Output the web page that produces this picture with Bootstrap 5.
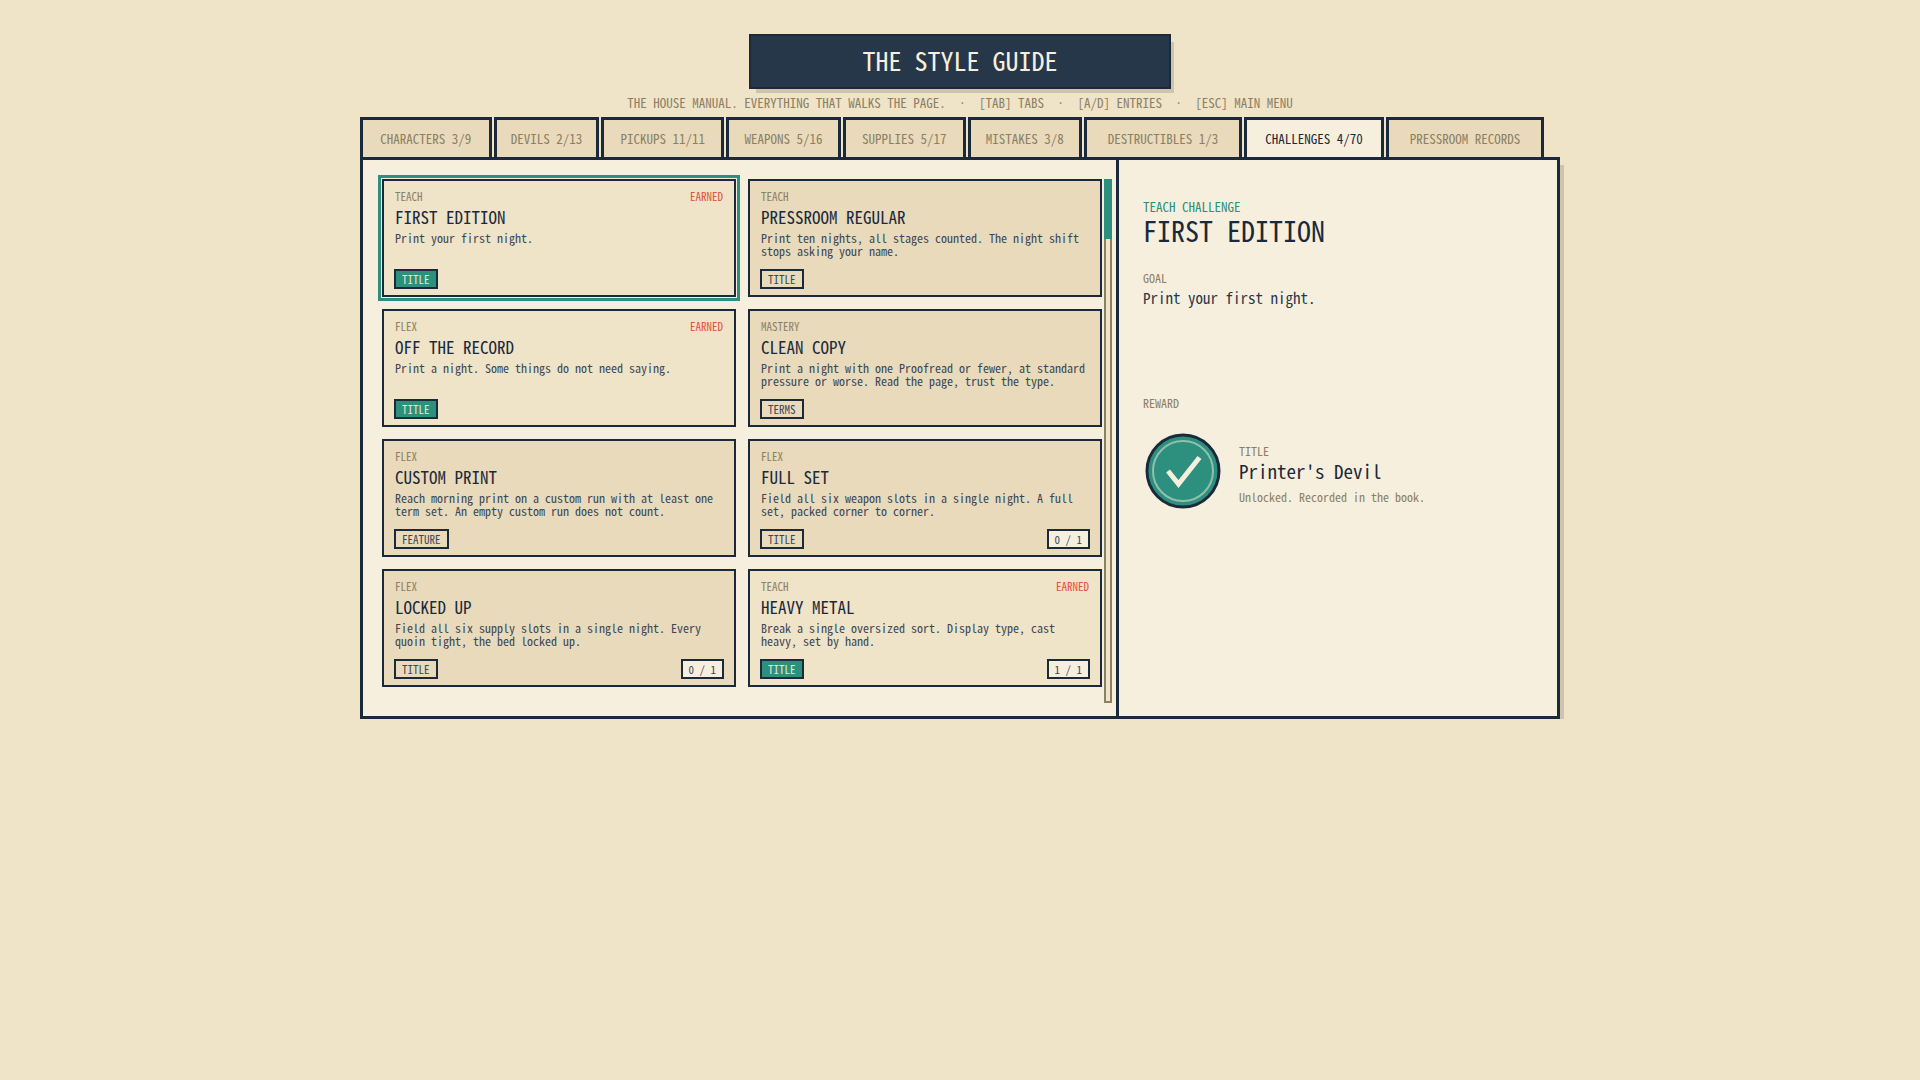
<!DOCTYPE html>
<html lang="en">
<head>
<meta charset="utf-8">
<meta name="viewport" content="width=device-width, initial-scale=1">
<title>The Style Guide</title>
<link href="https://cdn.jsdelivr.net/npm/bootstrap@5.3.0/dist/css/bootstrap.min.css" rel="stylesheet">
<style>
  :root {
    --ink: #1b2a3b; --slate: #27374a; --paper: #f7efdd; --sand: #efe3c8;
    --tan: #e8dabb; --mute: #8c8063; --green: #2d8f7d; --red: #e0523f; --shade: #cdc3ae;
  }
  body {
    background: var(--sand); color: var(--ink);
    font-family: "Noto Sans Mono CJK JP", "Noto Sans Mono CJK SC", "Liberation Mono", monospace;
    font-size: 12px; line-height: 16px;
  }
  button { font: inherit; color: inherit; }
  .guide { max-width: 1200px; }
  .masthead {
    width: 422px; max-width: 100%; height: 55px; margin-top: 34px;
    background: var(--slate); border: 2px solid var(--ink); color: var(--paper);
    box-shadow: 5px 6px 0 -2px var(--shade); font-size: 26px; line-height: 32px;
  }
  .hints { font-size: 13px; line-height: 16px; color: var(--mute); white-space: pre-wrap; padding: 6px 0; }
  .tabstrip { gap: 2px; }
  .tabstrip button {
    flex: 1 1 0; height: 40px; padding: 1px 2px 0; white-space: nowrap; font-size: 13px;
    background: var(--tan); color: var(--mute); border: 3px solid var(--ink); border-bottom: 0;
  }
  .tabstrip button.active { background: var(--paper); color: var(--ink); }
  .ledger { background: var(--paper); border: 3px solid var(--ink); box-shadow: 6px 6px 0 -2px var(--shade); }
  .entries { flex: 1 1 0; padding: 19px 4px 13px 19px; gap: 2px; }
  .entry-grid { display: grid; grid-template-columns: 1fr 1fr; gap: 12px; margin-bottom: 16px; }
  .entry { height: 118px; padding: 7px 10px 6px; background: var(--tan); border: 2px solid var(--ink); }
  .entry.earned { background: var(--sand); }
  .entry.picked { outline: 3px solid var(--green); outline-offset: 1px; }
  .kicker { font-size: 11px; line-height: 16px; color: var(--mute); padding: 0 1px; }
  .stamp { color: var(--red); }
  .entry-name { font-size: 17px; line-height: 22px; padding: 2px 1px 3px; }
  .entry-goal { font-size: 12px; line-height: 13px; color: #3b4757; padding: 0 1px; }
  .chip { font-size: 11px; line-height: 16px; padding: 0 6px; border: 2px solid var(--ink); color: #3b4757; }
  .earned .chip-reward { background: var(--green); color: var(--sand); }
  .chip-count { background: var(--paper); }
  .scrolltrack { width: 8px; background: var(--sand); border: 2px solid var(--mute); }
  .scrollthumb { height: 60px; margin: -2px; background: var(--green); }
  .detail { flex: 0 1 441px; padding: 39px 24px; border-left: 3px solid var(--ink); }
  .detail-kind { font-size: 13px; line-height: 16px; color: var(--green); }
  .detail-name { font-size: 28px; line-height: 31px; }
  .detail-label { font-size: 12px; line-height: 16px; color: var(--mute); }
  .detail-goal { font-size: 15px; line-height: 24px; min-height: 93px; color: var(--slate); }
  .reward-text { padding-top: 6px; }
  .reward-name { font-size: 19px; line-height: 24px; margin-bottom: 6px; }
</style>
</head>
<body>
<main class="guide mx-auto d-flex flex-column">
  <h1 class="masthead mx-auto mb-0 pb-1 fw-normal d-flex align-items-center justify-content-center">THE STYLE GUIDE</h1>
  <div class="hints text-center">THE HOUSE MANUAL. EVERYTHING THAT WALKS THE PAGE.  ·  [TAB] TABS  ·  [A/D] ENTRIES  ·  [ESC] MAIN MENU</div>

  <div class="tabstrip d-flex pe-3" role="tablist">
    <button type="button" role="tab" style="flex-grow:14">CHARACTERS 3/9</button>
    <button type="button" role="tab" style="flex-grow:11">DEVILS 2/13</button>
    <button type="button" role="tab" style="flex-grow:13">PICKUPS 11/11</button>
    <button type="button" role="tab" style="flex-grow:12">WEAPONS 5/16</button>
    <button type="button" role="tab" style="flex-grow:13">SUPPLIES 5/17</button>
    <button type="button" role="tab" style="flex-grow:12">MISTAKES 3/8</button>
    <button type="button" role="tab" style="flex-grow:17">DESTRUCTIBLES 1/3</button>
    <button type="button" role="tab" class="active" aria-selected="true" style="flex-grow:15">CHALLENGES 4/70</button>
    <button type="button" role="tab" style="flex-grow:17">PRESSROOM RECORDS</button>
  </div>

  <div class="ledger d-flex">
    <section class="entries d-flex">
      <div class="entry-grid flex-grow-1">
        <button type="button" class="entry earned picked d-flex flex-column text-start">
          <span class="kicker d-flex justify-content-between w-100"><span>TEACH</span><span class="stamp">EARNED</span></span>
          <span class="entry-name">FIRST EDITION</span>
          <span class="entry-goal">Print your first night.</span>
          <span class="d-flex justify-content-between w-100 mt-auto"><span class="chip chip-reward">TITLE</span></span>
        </button>
        <button type="button" class="entry d-flex flex-column text-start">
          <span class="kicker">TEACH</span>
          <span class="entry-name">PRESSROOM REGULAR</span>
          <span class="entry-goal">Print ten nights, all stages counted. The night shift stops asking your name.</span>
          <span class="d-flex justify-content-between w-100 mt-auto"><span class="chip chip-reward">TITLE</span></span>
        </button>
        <button type="button" class="entry earned d-flex flex-column text-start">
          <span class="kicker d-flex justify-content-between w-100"><span>FLEX</span><span class="stamp">EARNED</span></span>
          <span class="entry-name">OFF THE RECORD</span>
          <span class="entry-goal">Print a night. Some things do not need saying.</span>
          <span class="d-flex justify-content-between w-100 mt-auto"><span class="chip chip-reward">TITLE</span></span>
        </button>
        <button type="button" class="entry d-flex flex-column text-start">
          <span class="kicker">MASTERY</span>
          <span class="entry-name">CLEAN COPY</span>
          <span class="entry-goal">Print a night with one Proofread or fewer, at standard pressure or worse. Read the page, trust the type.</span>
          <span class="d-flex justify-content-between w-100 mt-auto"><span class="chip chip-reward">TERMS</span></span>
        </button>
        <button type="button" class="entry d-flex flex-column text-start">
          <span class="kicker">FLEX</span>
          <span class="entry-name">CUSTOM PRINT</span>
          <span class="entry-goal">Reach morning print on a custom run with at least one term set. An empty custom run does not count.</span>
          <span class="d-flex justify-content-between w-100 mt-auto"><span class="chip chip-reward">FEATURE</span></span>
        </button>
        <button type="button" class="entry d-flex flex-column text-start">
          <span class="kicker">FLEX</span>
          <span class="entry-name">FULL SET</span>
          <span class="entry-goal">Field all six weapon slots in a single night. A full set, packed corner to corner.</span>
          <span class="d-flex justify-content-between w-100 mt-auto"><span class="chip chip-reward">TITLE</span><span class="chip chip-count">0 / 1</span></span>
        </button>
        <button type="button" class="entry d-flex flex-column text-start">
          <span class="kicker">FLEX</span>
          <span class="entry-name">LOCKED UP</span>
          <span class="entry-goal">Field all six supply slots in a single night. Every quoin tight, the bed locked up.</span>
          <span class="d-flex justify-content-between w-100 mt-auto"><span class="chip chip-reward">TITLE</span><span class="chip chip-count">0 / 1</span></span>
        </button>
        <button type="button" class="entry earned d-flex flex-column text-start">
          <span class="kicker d-flex justify-content-between w-100"><span>TEACH</span><span class="stamp">EARNED</span></span>
          <span class="entry-name">HEAVY METAL</span>
          <span class="entry-goal">Break a single oversized sort. Display type, cast heavy, set by hand.</span>
          <span class="d-flex justify-content-between w-100 mt-auto"><span class="chip chip-reward">TITLE</span><span class="chip chip-count">1 / 1</span></span>
        </button>
      </div>
      <div class="scrolltrack flex-shrink-0"><div class="scrollthumb"></div></div>
    </section>

    <section class="detail">
      <div class="detail-kind">TEACH CHALLENGE</div>
      <h2 class="detail-name fw-normal mb-4">FIRST EDITION</h2>
      <div class="detail-label">GOAL</div>
      <p class="detail-goal mb-3">Print your first night.</p>
      <div class="detail-label mb-3">REWARD</div>
      <div class="d-flex align-items-center gap-3 pt-1">
        <svg width="80" height="80" viewBox="-40 -40 80 80" fill="none" role="img" aria-label="Earned">
          <circle r="36" fill="#2d8f7d" stroke="#1b2a3b" stroke-width="3"/>
          <circle r="30" stroke="#f7efdd" stroke-opacity=".5" stroke-width="2"/>
          <path d="M-15 0L-4.500 13L16.500 -13.500" stroke="#f7efdd" stroke-width="5"/>
        </svg>
        <div class="reward-text">
          <div class="detail-label">TITLE</div>
          <div class="reward-name">Printer's Devil</div>
          <div class="detail-label">Unlocked. Recorded in the book.</div>
        </div>
      </div>
    </section>
  </div>
</main>
<script src="https://cdn.jsdelivr.net/npm/bootstrap@5.3.0/dist/js/bootstrap.bundle.min.js"></script>
</body>
</html>
